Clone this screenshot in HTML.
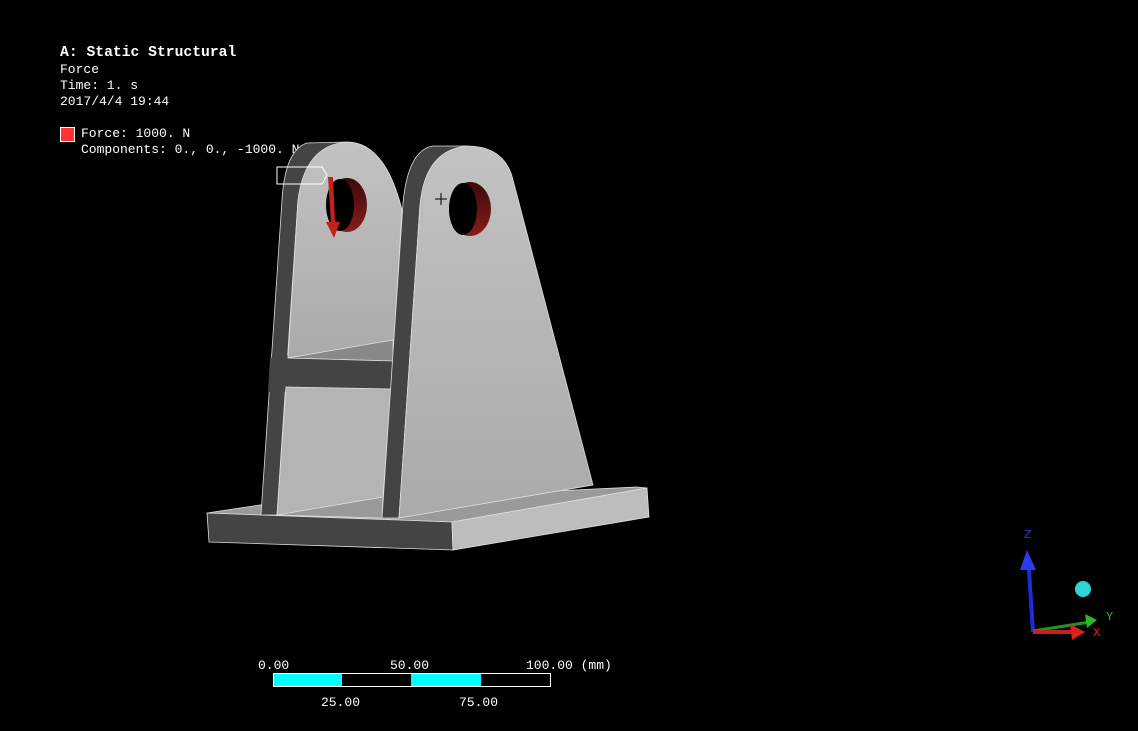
<!DOCTYPE html>
<html><head><meta charset="utf-8"><style>
html,body{margin:0;padding:0;background:#000;width:1138px;height:731px;overflow:hidden}
.t{position:absolute;color:#fff;font-family:"Liberation Mono",monospace;font-size:13px;white-space:pre;line-height:16px}
</style></head><body>
<div class="t" style="left:60px;top:45px;font-weight:bold;font-size:14.7px">A: Static Structural</div>
<div class="t" style="left:60px;top:62px">Force</div>
<div class="t" style="left:60px;top:78px">Time: 1. s</div>
<div class="t" style="left:60px;top:94px">2017/4/4 19:44</div>
<div style="position:absolute;left:60px;top:127px;width:15px;height:15px;background:#f33;border:1px solid #fff;box-sizing:border-box"></div>
<div class="t" style="left:81px;top:126px">Force: 1000. N</div>
<div class="t" style="left:81px;top:142px">Components: 0., 0., -1000. N</div>

<svg width="1138" height="731" style="position:absolute;left:0;top:0" xmlns="http://www.w3.org/2000/svg">
<defs>
<linearGradient id="g1" x1="0" y1="0" x2="0" y2="1"><stop offset="0" stop-color="#c2c2c2"/><stop offset="1" stop-color="#aaa"/></linearGradient>
<linearGradient id="hr" x1="0" y1="0" x2="0" y2="1"><stop offset="0" stop-color="#3a0a0a"/><stop offset="1" stop-color="#8a1c1c"/></linearGradient>
</defs>
<g stroke="#ddd" stroke-width="0.8">
<polygon points="207,513 260,505 637,487 647,488 452,522" fill="#9a9a9a"/>
<polygon points="207,513 452,522 453,550 209,542" fill="#444"/>
<polygon points="452,522 647,488 649,517 453,550" fill="#bdbdbd"/>
<path d="M261,515 L282,200 Q285,150 307,143 L347,142 L350,190 L298,200 L277,515 Z" fill="#444"/>
<polygon points="270,358 400,340 398,390 268,392" fill="#444" stroke="none"/>
<path d="M288,358 L298,200 Q305,145 347,142 Q385,142 402,210 L394,340 Z" fill="url(#g1)"/>
<polygon points="288,358 393,340 393,361" fill="#888"/>
<polygon points="286,387 391,389 383,497 380,517 277,515" fill="#b4b4b4"/>
<polygon points="277,515 383,497 382,518" fill="#999"/>
<path d="M382,518 L403,203 Q408,150 433,146 L467,146 L420,205 L399,518 Z" fill="#444"/>
<path d="M399,518 L420,205 Q425,150 467,146 Q505,146 513,180 L593,485 Z" fill="url(#g1)"/>
</g>
<ellipse cx="347" cy="205" rx="20" ry="27" fill="url(#hr)"/>
<ellipse cx="340" cy="205" rx="14" ry="26" fill="#000"/>
<ellipse cx="470" cy="209" rx="21" ry="27" fill="url(#hr)"/>
<ellipse cx="463" cy="209" rx="14" ry="26" fill="#000"/>
<polygon points="328,177 333,177 335,222 340,222 334,238 326,222 331,222" fill="#c52020"/>
<polygon points="277,167 322,167 327,175 322,184 277,184" fill="none" stroke="#fff" stroke-width="1"/>
<path d="M435,199h12M441,193v12" stroke="#000" stroke-width="1"/>
<rect x="273.5" y="673.5" width="277" height="13" fill="#000" stroke="#fff"/>
<rect x="274" y="674" width="68" height="12" fill="#0ff"/>
<rect x="411" y="674" width="70" height="12" fill="#0ff"/>
<g font-family="Liberation Mono,monospace" font-size="13" fill="#fff">
<text x="258" y="669">0.00</text><text x="390" y="669">50.00</text><text x="526" y="669">100.00 (mm)</text>
<text x="321" y="706">25.00</text><text x="459" y="706">75.00</text>
</g>
<line x1="1033" y1="632" x2="1029" y2="570" stroke="#1a2ed8" stroke-width="4"/>
<polygon points="1027,550 1020,570 1036,570" fill="#2a3cf0"/>
<line x1="1033" y1="631" x2="1090" y2="622" stroke="#1a9a1a" stroke-width="3"/>
<polygon points="1097,620 1085,614 1087,628" fill="#2cb82c"/>
<line x1="1033" y1="632" x2="1075" y2="632" stroke="#c81e1e" stroke-width="4"/>
<polygon points="1085,632 1070,624 1072,640" fill="#e02020"/>
<circle cx="1083" cy="589" r="8" fill="#2cd6d6"/>
<g font-family="Liberation Mono,monospace" font-size="12">
<text x="1024" y="538" fill="#2a3cf0">Z</text><text x="1106" y="620" fill="#2cb82c">Y</text><text x="1093" y="636" fill="#f02020">X</text>
</g>
</svg>
</body></html>
